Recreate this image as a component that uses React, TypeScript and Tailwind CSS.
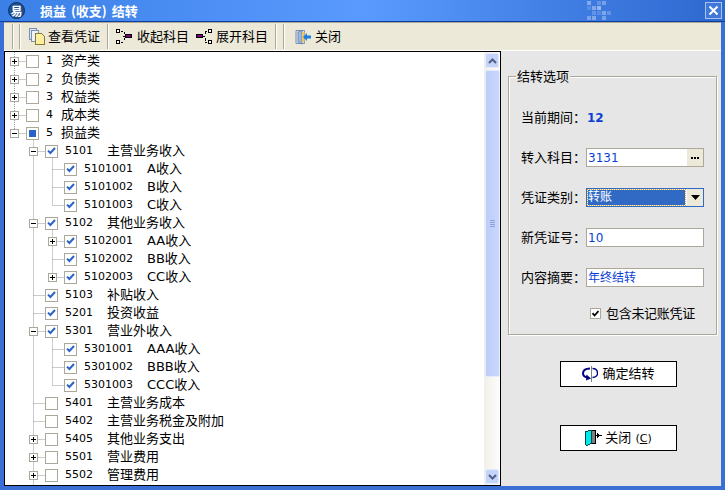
import React from "react";

type Row = { l: 0 | 1 | 2; code: string; name: string; exp?: "+" | "-"; chk?: "on" | "part" };

const rows: Row[] = [
  { l: 0, code: "1", name: "资产类", exp: "+" },
  { l: 0, code: "2", name: "负债类", exp: "+" },
  { l: 0, code: "3", name: "权益类", exp: "+" },
  { l: 0, code: "4", name: "成本类", exp: "+" },
  { l: 0, code: "5", name: "损益类", exp: "-", chk: "part" },
  { l: 1, code: "5101", name: "主营业务收入", exp: "-", chk: "on" },
  { l: 2, code: "5101001", name: "A收入", chk: "on" },
  { l: 2, code: "5101002", name: "B收入", chk: "on" },
  { l: 2, code: "5101003", name: "C收入", chk: "on" },
  { l: 1, code: "5102", name: "其他业务收入", exp: "-", chk: "on" },
  { l: 2, code: "5102001", name: "AA收入", exp: "+", chk: "on" },
  { l: 2, code: "5102002", name: "BB收入", chk: "on" },
  { l: 2, code: "5102003", name: "CC收入", exp: "+", chk: "on" },
  { l: 1, code: "5103", name: "补贴收入", chk: "on" },
  { l: 1, code: "5201", name: "投资收益", chk: "on" },
  { l: 1, code: "5301", name: "营业外收入", exp: "-", chk: "on" },
  { l: 2, code: "5301001", name: "AAA收入", chk: "on" },
  { l: 2, code: "5301002", name: "BBB收入", chk: "on" },
  { l: 2, code: "5301003", name: "CCC收入", chk: "on" },
  { l: 1, code: "5401", name: "主营业务成本" },
  { l: 1, code: "5402", name: "主营业务税金及附加" },
  { l: 1, code: "5405", name: "其他业务支出", exp: "+" },
  { l: 1, code: "5501", name: "营业费用", exp: "+" },
  { l: 1, code: "5502", name: "管理费用", exp: "+" },
];

const FONT = "[font-family:'DejaVu_Sans','Noto_Sans_CJK_SC',sans-serif]";

function Expander({ kind }: { kind?: "+" | "-" }) {
  if (!kind) return <span className="w-[9px] h-[9px] shrink-0 mr-[7px]" />;
  return (
    <svg width="9" height="9" viewBox="0 0 9 9" className="shrink-0 mr-[7px] relative" shapeRendering="crispEdges">
      <rect x="0.5" y="0.5" width="8" height="8" fill="#fff" stroke="#aca899" />
      <rect x="2" y="4" width="5" height="1" fill="#000" />
      {kind === "+" && <rect x="4" y="2" width="1" height="5" fill="#000" />}
    </svg>
  );
}

function Check({ state }: { state?: "on" | "part" }) {
  return (
    <span className="relative w-[13px] h-[13px] shrink-0 border border-[#aca899] bg-white flex items-center justify-center">
      {state === "on" && (
        <svg width="9" height="8" viewBox="0 0 9 8">
          <path d="M1 3.6 L3.4 6 L8 1" fill="none" stroke="#2a62c9" strokeWidth="2" />
        </svg>
      )}
      {state === "part" && <span className="w-[7px] h-[7px] bg-[#2a62c9]" />}
    </span>
  );
}

function TreeLines() {
  const cy = (i: number) => i * 18 + 9.5;
  const xOf = { 0: 9.5, 1: 28.5, 2: 47.5 } as const;
  const d: string[] = [];
  rows.forEach((r, i) => {
    d.push(`M${xOf[r.l]} ${cy(i)}H${xOf[r.l] + 11}`);
  });
  d.push(`M9.5 0V${cy(4)}`);
  d.push(`M28.5 ${cy(4)}V433`);
  d.push(`M47.5 ${cy(5)}V${cy(8)}`);
  d.push(`M47.5 ${cy(9)}V${cy(12)}`);
  d.push(`M47.5 ${cy(15)}V${cy(18)}`);
  return (
    <svg className="absolute left-0 top-0 pointer-events-none" width="80" height="433">
      <path d={d.join("")} fill="none" stroke="#999" strokeDasharray="1 1" />
    </svg>
  );
}

function TreeRow({ r }: { r: Row }) {
  const pad = r.l === 0 ? "pl-[5px]" : r.l === 1 ? "pl-[24px]" : "pl-[43px]";
  const codeW = r.l === 0 ? "w-[15px]" : r.l === 1 ? "w-[42px]" : "w-[63px]";
  return (
    <div className={`h-[18px] flex items-center relative ${pad}`}>
      <Expander kind={r.exp} />
      <Check state={r.chk} />
      <span className={`ml-[7px] ${codeW} text-[11px] leading-[18px] shrink-0`}>{r.code}</span>
      <span className="text-[13px] leading-[18px] whitespace-nowrap">{r.name}</span>
    </div>
  );
}

function Chevron({ up }: { up?: boolean }) {
  return (
    <div className="w-[14px] h-[15px] mx-auto bg-[#c5d5fa] border border-[#e4ebfd] rounded-[2px] flex items-center justify-center">
      <svg width="9" height="6" viewBox="0 0 9 6">
        <path d={up ? "M1 5 L4.5 1.5 L8 5" : "M1 1 L4.5 4.5 L8 1"} fill="none" stroke="#4d6185" strokeWidth="2" />
      </svg>
    </div>
  );
}

function Scrollbar() {
  return (
    <div className="w-[16px] shrink-0 flex flex-col pt-[1px] pb-[1px] bg-gradient-to-r from-[#f1efe8] to-[#fdfdfb]">
      <Chevron up />
      <div className="mt-[2px] w-[15px] h-[307px] mx-auto bg-gradient-to-r from-[#bccdf9] to-[#c9d8fc] border border-[#e4ebfd] rounded-[2px] flex flex-col items-center justify-center gap-[1px]">
        <span className="w-[5px] h-[1px] bg-[#8ba3d8]" />
        <span className="w-[5px] h-[1px] bg-[#8ba3d8]" />
        <span className="w-[5px] h-[1px] bg-[#8ba3d8]" />
        <span className="w-[5px] h-[1px] bg-[#8ba3d8]" />
      </div>
      <div className="flex-1" />
      <Chevron />
    </div>
  );
}

function DocIcon() {
  return (
    <svg width="16" height="17" viewBox="0 0 16 17" className="shrink-0" shapeRendering="crispEdges">
      <rect x="0.5" y="0.5" width="7" height="11" fill="#dfe6f2" stroke="#7a8fb5" />
      <rect x="2.5" y="2.5" width="7" height="11" fill="#eef1f7" stroke="#7a8fb5" />
      <path d="M6.5 5.5H12.5L15.5 8.5V16.5H6.5Z" fill="#fdeea0" stroke="#8a7a30" />
    </svg>
  );
}

function CollapseIcon() {
  return (
    <svg width="16" height="15" viewBox="0 0 16 15" className="shrink-0" shapeRendering="crispEdges">
      <rect x="0.5" y="0.5" width="3" height="3" fill="#fff" stroke="#000" />
      <rect x="0.5" y="11.5" width="3" height="3" fill="#fff" stroke="#000" />
      <path d="M5 2H7M8 3V5M7 7H10M8 9V11M5 13H7" stroke="#000" fill="none" />
      <rect x="9.5" y="5.5" width="6" height="3" fill="#800080" stroke="#000" />
    </svg>
  );
}

function ExpandIcon() {
  return (
    <svg width="16" height="15" viewBox="0 0 16 15" className="shrink-0" shapeRendering="crispEdges">
      <rect x="0.5" y="5.5" width="6" height="3" fill="#800080" stroke="#000" />
      <path d="M7 7H9M9 5V3M9 2H11M9 9V12M9 13H11" stroke="#000" fill="none" />
      <rect x="12.5" y="0.5" width="3" height="3" fill="#fff" stroke="#000" />
      <rect x="12.5" y="11.5" width="3" height="3" fill="#fff" stroke="#000" />
    </svg>
  );
}

function ExitIcon() {
  return (
    <svg width="16" height="16" viewBox="0 0 16 16" className="shrink-0">
      <path d="M1 1.5H9.5V14.5H1Z" fill="#d9e2f0" stroke="#7c8fb8" />
      <path d="M3 3L7 1.5V15L3 13Z" fill="#9fb5d9" stroke="#5f78a8" strokeWidth="0.7" />
      <rect x="7" y="3" width="2.5" height="10" fill="#f3c85a" />
      <path d="M16 6.5H12V4L8 8L12 12V9.5H16Z" fill="#1a7fe0" />
    </svg>
  );
}

function LoopIcon() {
  return (
    <svg width="16" height="16" viewBox="0 0 16 16" className="shrink-0">
      <path d="M8 2.5C3 2.5 1 4.5 1 7.5C1 9.5 3 11 5.5 11.5" fill="none" stroke="#000080" strokeWidth="2" />
      <path d="M4.5 8.5L9 12.5L4 14.5Z" fill="#000080" />
      <path d="M10.5 2.5C14 2.5 15.5 5 15.5 7.5C15.5 9.5 14 11 10.5 11.5" fill="none" stroke="#000080" strokeWidth="1.3" />
      <rect x="9" y="0" width="1" height="16" fill="#808080" />
    </svg>
  );
}

function DoorIcon() {
  return (
    <svg width="17" height="16" viewBox="0 0 17 16" className="shrink-0" shapeRendering="crispEdges">
      <rect x="5.5" y="0.5" width="5" height="13" fill="#808080" stroke="#000" />
      <path d="M0.5 1.5L6.5 0.5V13.5L1.5 15.5L0.5 14.5Z" fill="#00e8e8" stroke="#004848" />
      <rect x="11" y="5" width="6" height="1" fill="#000" />
      <rect x="12" y="3" width="1" height="5" fill="#000" />
      <rect x="13" y="4" width="1" height="3" fill="#000" />
    </svg>
  );
}

const PIXELS: [number, number, number][] = [
  [0, 0, 0.35], [10, 0, 0.2], [15, 0, 0.3],
  [5, 5, 0.35], [10, 5, 0.45], [0, 5, 0.15],
  [5, 10, 0.2], [15, 10, 0.35], [10, 10, 0.15], [20, 10, 0.2],
  [0, 15, 0.3], [5, 15, 0.35], [15, 15, 0.3],
];

function TitleBar() {
  return (
    <div className="relative h-[22px] shrink-0 flex items-center bg-gradient-to-r from-[#3a80e6] via-[#5a9aff] to-[#2d68cf] border-b border-[#0a3f9e]">
      <span className="ml-[8px] w-[17px] h-[17px] rounded-full bg-[#1d4f94] border border-[#0f2f60] flex items-center justify-center text-white text-[12px] font-bold leading-none [font-family:'Noto_Sans_CJK_SC',sans-serif]">
        易
      </span>
      <span className="ml-[15px] text-white text-[13px] font-bold leading-none whitespace-nowrap [word-spacing:2px] [font-family:'Noto_Sans_CJK_SC',sans-serif]">
        损益 (收支) 结转
      </span>
      <svg className="absolute left-[587px] top-[1px]" width="26" height="20" viewBox="0 0 26 20">
        {PIXELS.map(([x, y, o], i) => (
          <rect key={i} x={x} y={y} width="4" height="4" fill="#fff" opacity={o} />
        ))}
      </svg>
      <span className="absolute left-[705px] top-[2px] w-[17px] h-[17px] border border-[#a9c2ee] bg-[#3f78d8] flex items-center justify-center">
        <svg width="11" height="11" viewBox="0 0 11 11">
          <path d="M1.5 1.5L9.5 9.5M9.5 1.5L1.5 9.5" stroke="#fff" strokeWidth="2" />
        </svg>
      </span>
    </div>
  );
}

function Sep({ className = "" }: { className?: string }) {
  return <span className={`w-[2px] h-[25px] shrink-0 border-l border-[#aca899] border-r border-r-white ${className}`} />;
}

function Toolbar() {
  return (
    <div className="h-[29px] shrink-0 flex items-center bg-[#ece9d8] border-t border-t-[#aca899] border-b border-b-white text-[13px] text-black">
      <Sep className="ml-[8px]" />
      <Sep className="ml-[5px]" />
      <span className="ml-[8px]"><DocIcon /></span>
      <span className="ml-[3px] w-[52px] whitespace-nowrap">查看凭证</span>
      <Sep className="ml-[7px]" />
      <span className="ml-[7px]"><CollapseIcon /></span>
      <span className="ml-[5px] w-[52px] whitespace-nowrap">收起科目</span>
      <span className="ml-[7px]"><ExpandIcon /></span>
      <span className="ml-[4px] w-[52px] whitespace-nowrap">展开科目</span>
      <Sep className="ml-[7px]" />
      <Sep className="ml-[6px]" />
      <span className="ml-[10px]"><ExitIcon /></span>
      <span className="ml-[4px] whitespace-nowrap">关闭</span>
    </div>
  );
}

function FormRow({ label, children }: { label: string; children: React.ReactNode }) {
  return (
    <div className="h-[19px] flex items-center">
      <span className="w-[65px] shrink-0 text-[13px] whitespace-nowrap">{label}</span>
      {children}
    </div>
  );
}

function Field({ value, btn }: { value: string; btn?: boolean }) {
  return (
    <div className="w-[118px] h-[19px] bg-white border border-[#aca899] flex items-center justify-between text-[#0a3fd6]">
      <span className="pl-[1px] text-[12px] leading-none">{value}</span>
      {btn && (
        <span className="w-[16px] h-[17px] bg-[#ece9d8] flex items-center justify-center gap-[1px]">
          <span className="w-[2px] h-[2px] bg-black" />
          <span className="w-[2px] h-[2px] bg-black" />
          <span className="w-[2px] h-[2px] bg-black" />
        </span>
      )}
    </div>
  );
}

function SelectField() {
  return (
    <div className="w-[118px] h-[19px] bg-white border border-[#316ac5] flex items-center">
      <span className="flex-1 h-[15px] ml-[1px] bg-[#316ac5] text-white text-[12px] leading-[14px] outline-dotted outline-1 outline-[#e0a030]">
        转账
      </span>
      <span className="w-[16px] h-[17px] ml-[2px] bg-[#ece9d8] flex items-center justify-center">
        <svg width="9" height="5" viewBox="0 0 9 5"><path d="M0 0H9L4.5 5Z" fill="#000" /></svg>
      </span>
    </div>
  );
}

function Options() {
  return (
    <div className="relative w-[209px] h-[259px] mt-[25px] ml-[7px] border border-[#aca899] shadow-[1px_1px_0_#fff,inset_1px_1px_0_#fff] pt-[31px] pl-[12px] flex flex-col gap-[21px]">
      <span className="absolute left-[7px] top-[-9px] px-[1px] bg-[#e6e6e6] text-[13px] leading-[18px]">结转选项</span>
      <FormRow label="当前期间：">
        <span className="pl-[1px] text-[12px] font-bold text-[#0a3fd6]">12</span>
      </FormRow>
      <FormRow label="转入科目：">
        <Field value="3131" btn />
      </FormRow>
      <FormRow label="凭证类别：">
        <SelectField />
      </FormRow>
      <FormRow label="新凭证号：">
        <Field value="10" />
      </FormRow>
      <FormRow label="内容摘要：">
        <Field value="年终结转" />
      </FormRow>
      <div className="h-[11px] flex items-center pl-[69px]">
        <span className="w-[11px] h-[11px] shrink-0 bg-white border border-[#aca899] flex items-center justify-center">
          <svg width="7" height="7" viewBox="0 0 7 7"><path d="M0.5 3.2L2.6 5.5L6.5 1" fill="none" stroke="#000" strokeWidth="1.8" /></svg>
        </span>
        <span className="ml-[5px] text-[13px] tracking-[-0.3px] whitespace-nowrap">包含未记账凭证</span>
      </div>
    </div>
  );
}

export default function App() {
  return (
    <div className={`w-[725px] h-[490px] overflow-hidden bg-[#3a6fd8] flex flex-col text-black ${FONT}`}>
      <TitleBar />
      <div className="mx-[4px] flex flex-col">
        <Toolbar />
        <div className="h-[435px] flex bg-[#e6e6e6]">
          <div className="w-[497px] shrink-0 border border-black bg-white flex">
            <div className="relative flex-1 overflow-hidden">
              <TreeLines />
              {rows.map((r) => (
                <TreeRow key={r.code} r={r} />
              ))}
            </div>
            <Scrollbar />
          </div>
          <div className="flex-1 flex flex-col">
            <Options />
            <button className="mt-[26px] ml-[59px] w-[117px] h-[26px] bg-white border border-black flex items-center justify-center gap-[4px] text-[13px]">
              <LoopIcon />
              <span>确定结转</span>
            </button>
            <button className="mt-[38px] ml-[59px] w-[117px] h-[26px] bg-white border border-black flex items-center justify-center gap-[3px] text-[13px]">
              <DoorIcon />
              <span>关闭 <span className="text-[11px]">(<span className="underline">C</span>)</span></span>
            </button>
          </div>
        </div>
      </div>
    </div>
  );
}
